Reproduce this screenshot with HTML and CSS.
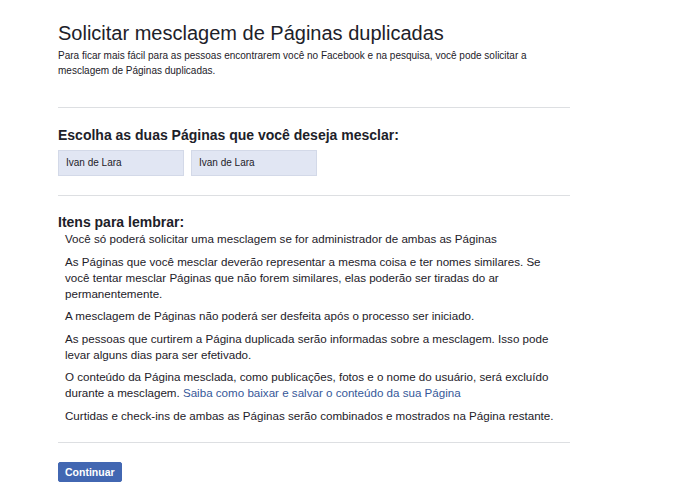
FILE: index.html
```html
<!DOCTYPE html>
<html lang="pt-BR">
<head>
<meta charset="UTF-8" />
<meta name="viewport" content="width=device-width, initial-scale=1" />
<title>Solicitar mesclagem de Páginas duplicadas</title>
<link rel="stylesheet" href="styles.css">
</head>
<body>
<div class="merge">
    <h1 class="merge-title">Solicitar mesclagem de Páginas duplicadas</h1>
    <p class="merge-intro">Para ficar mais fácil para as pessoas encontrarem você no Facebook e na pesquisa, você pode solicitar a mesclagem de Páginas duplicadas.</p>

    <hr class="divider divider-top" />

    <h2 class="section-title">Escolha as duas Páginas que você deseja mesclar:</h2>
    <div class="page-pickers">
        <div class="page-picker">Ivan de Lara</div>
        <div class="page-picker">Ivan de Lara</div>
    </div>

    <hr class="divider divider-mid" />

    <h2 class="section-title reminders-title">Itens para lembrar:</h2>
    <ul class="reminders">
        <li>Você só poderá solicitar uma mesclagem se for administrador de ambas as Páginas</li>
        <li>As Páginas que você mesclar deverão representar a mesma coisa e ter nomes similares. Se você tentar mesclar Páginas que não forem similares, elas poderão ser tiradas do ar permanentemente.</li>
        <li>A mesclagem de Páginas não poderá ser desfeita após o processo ser iniciado.</li>
        <li>As pessoas que curtirem a Página duplicada serão informadas sobre a mesclagem. Isso pode levar alguns dias para ser efetivado.</li>
        <li>O conteúdo da Página mesclada, como publicações, fotos e o nome do usuário, será excluído durante a mesclagem. <a href="#">Saiba como baixar e salvar o conteúdo da sua Página</a></li>
        <li>Curtidas e check-ins de ambas as Páginas serão combinados e mostrados na Página restante.</li>
    </ul>

    <hr class="divider divider-bottom" />

    <button class="continue-btn">Continuar</button>
</div>
</body>
</html>
```

FILE: styles.css
```css
body {
    font-family: Arial, "Liberation Sans", sans-serif;
    background: #fff;
    color: #1d2129;
    margin: 0;
    padding: 0;
}
.merge {
    width: 512px;
    padding: 20px 0 0 58px;
}
.merge-title {
    margin: 0;
    font-size: 20px;
    font-weight: normal;
    line-height: 26px;
}
.merge-intro {
    margin: 2px 0 0;
    font-size: 10px;
    line-height: 15px;
}
.divider {
    border: none;
    border-top: 1px solid #dddfe2;
    margin: 0;
}
.divider-top {
    margin-top: 29px;
}
.section-title {
    margin: 18px 0 0;
    font-size: 14px;
    font-weight: bold;
    line-height: 18px;
}
.page-pickers {
    display: flex;
    gap: 7px;
    margin-top: 6px;
}
.page-picker {
    width: 117px;
    height: 24px;
    padding: 0 0 0 7px;
    background: #e1e6f3;
    border: 1px solid #d3d9e8;
    font-size: 10px;
    line-height: 24px;
}
.divider-mid {
    margin-top: 19px;
}
.reminders-title {
    margin-top: 17px;
}
.reminders {
    list-style: none;
    margin: 0;
    padding: 0 15px 0 7px;
    font-size: 11.6px;
    line-height: 16px;
}
.reminders li {
    margin-bottom: 6.5px;
}
.reminders li:last-child {
    margin-bottom: 0;
}
.reminders a {
    color: #365899;
    text-decoration: none;
}
.divider-bottom {
    margin-top: 18px;
}
.continue-btn {
    display: block;
    margin-top: 19px;
    background: #4267b2;
    border: 1px solid #4267b2;
    border-radius: 2px;
    color: #fff;
    font-family: inherit;
    font-size: 10.5px;
    font-weight: bold;
    height: 20px;
    padding: 0 6px;
    cursor: pointer;
}
```
